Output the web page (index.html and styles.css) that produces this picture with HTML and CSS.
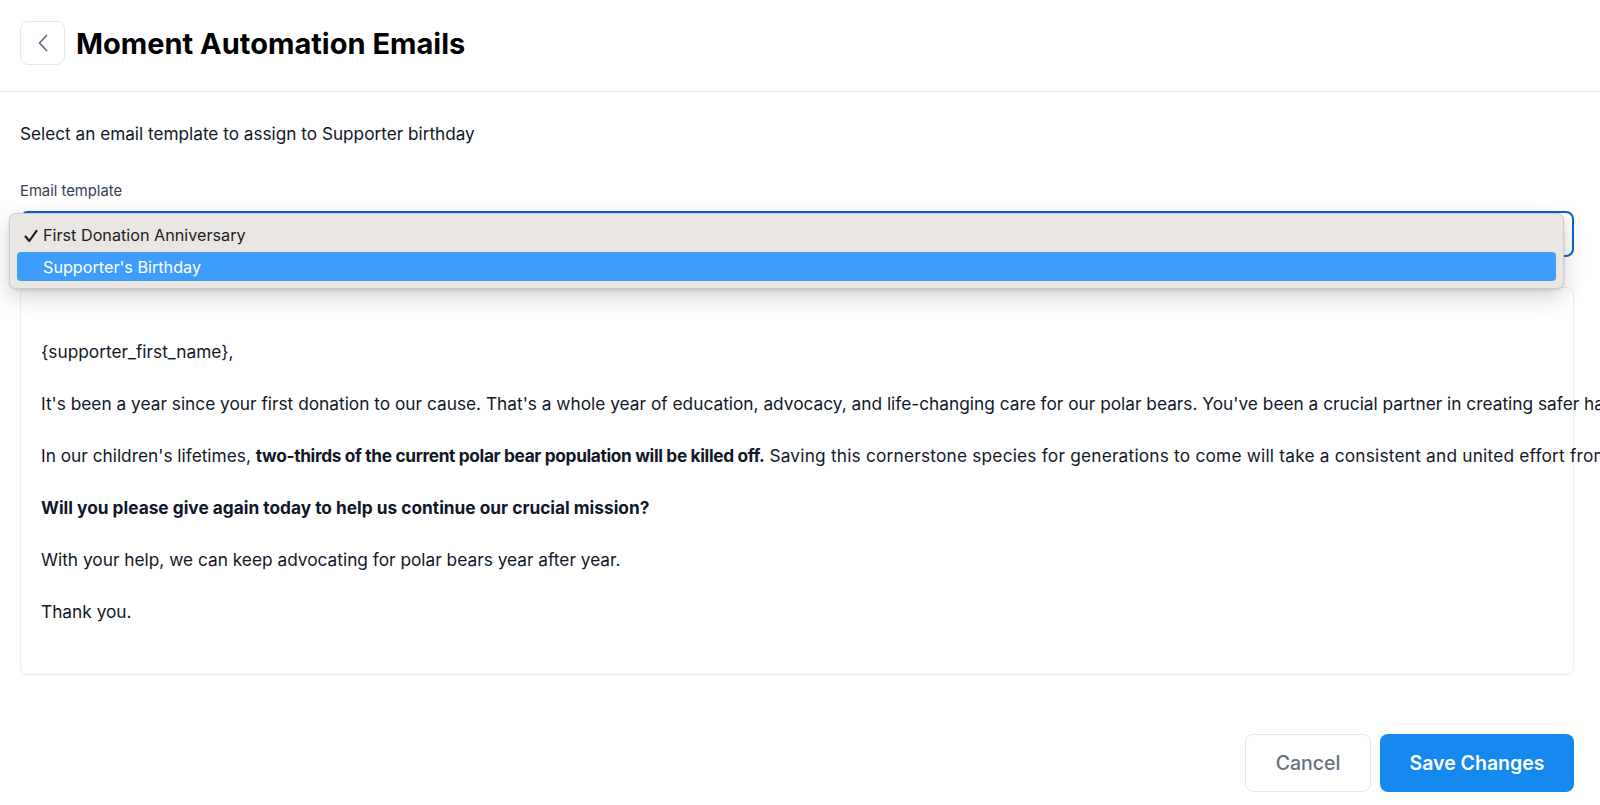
FILE: index.html
```html
<!DOCTYPE html>
<html lang="en">
<head>
<meta charset="utf-8">
<title>Moment Automation Emails</title>
<link rel="stylesheet" href="styles.css">
</head>
<body>
<header class="page-header">
  <button class="back-btn" aria-label="Back">
    <svg width="16" height="20" viewBox="0 0 16 20" fill="none"><path d="M11.5 2.5 L4.5 10 L11.5 17.5" stroke="#667085" stroke-width="1.8" stroke-linecap="round" stroke-linejoin="round"/></svg>
  </button>
  <h1 class="page-title">Moment Automation Emails</h1>
</header>
<main class="content">
  <p class="intro">Select an email template to assign to Supporter birthday</p>
  <label class="field-label">Email template</label>
  <div class="select-wrap">
    <div class="select-box"></div>
    <div class="menu">
      <div class="menu-item">
        <svg class="check" width="14" height="14" viewBox="0 0 14 14" fill="none"><path d="M1.5 7.5 L5.3 12 L12.5 1.8" stroke="#1a1a1a" stroke-width="2.1" stroke-linecap="round" stroke-linejoin="round"/></svg>
        <span>First Donation Anniversary</span>
      </div>
      <div class="menu-item active"><span>Supporter's Birthday</span></div>
    </div>
  </div>
  <div class="preview">
    <p>{supporter_first_name},</p>
    <p>It's been a year since your first donation to our cause. That's a whole year of education, advocacy, and life-changing care for our polar bears. You've been a crucial partner in creating safer habitats and a brighter future for them.</p>
    <p>In our children's lifetimes, <strong class="tight">two-thirds of the current polar bear population will be killed off.</strong> <span class="loose">Saving this cornerstone species for generations to come will take a consistent and united effort from all of us.</span></p>
    <p><strong>Will you please give again today to help us continue our crucial mission?</strong></p>
    <p>With your help, we can keep advocating for polar bears year after year.</p>
    <p>Thank you.</p>
  </div>
  <div class="actions">
    <button class="btn btn-cancel">Cancel</button>
    <button class="btn btn-save">Save Changes</button>
  </div>
</main>
</body>
</html>
```

FILE: styles.css
```css
html, body {
  margin: 0;
  padding: 0;
  overflow: hidden;
  background: #ffffff;
  font-family: "Inter", "Liberation Sans", sans-serif;
  color: #101828;
}

.page-header {
  display: flex;
  align-items: center;
  gap: 11px;
  padding: 21px 20px 26px;
  border-bottom: 1px solid #e6e8ec;
}

.back-btn {
  width: 45px;
  height: 44px;
  box-sizing: border-box;
  border: 1px solid #e4e7ec;
  border-radius: 8px;
  background: #fff;
  display: flex;
  align-items: center;
  justify-content: center;
  padding: 0;
}

.page-title {
  margin: 0;
  font-size: 29px;
  font-weight: 700;
  color: #000;
}

.content {
  padding: 0 26px 0 20px;
}

.intro {
  margin: 30px 0 0;
  font-size: 17.2px;
  line-height: 24px;
  color: #101828;
}

.field-label {
  display: block;
  margin-top: 35px;
  font-size: 14.8px;
  line-height: 20px;
  color: #344054;
}

.select-wrap {
  position: relative;
  margin-top: 10px;
}

.select-box {
  height: 46px;
  box-sizing: border-box;
  border: 2px solid #0b63ce;
  border-radius: 8px;
}

.menu {
  position: absolute;
  top: 2px;
  left: -11px;
  width: 1555px;
  box-sizing: border-box;
  padding: 4px 7px 7px;
  background: #e9e6e3;
  border: 1px solid #cfccc9;
  border-radius: 7px;
  box-shadow: 0 8px 22px rgba(0, 0, 0, 0.18), 0 1px 3px rgba(0, 0, 0, 0.12);
  font-size: 16.2px;
  color: #1d1d1d;
}

.menu-item {
  position: relative;
  display: flex;
  align-items: center;
  height: 29px;
  padding-left: 26px;
  border-radius: 4px;
}

.menu-item:first-child {
  height: 34px;
}

.menu-item .check {
  position: absolute;
  left: 7px;
  top: 11px;
}

.menu-item.active {
  background: #3f9efc;
  color: #ffffff;
}

.preview {
  margin-top: 30px;
  height: 388px;
  box-sizing: border-box;
  border: 1px solid #ececec;
  border-radius: 7px;
  padding: 52px 20px;
  display: flex;
  flex-direction: column;
  gap: 28px;
}

.preview p {
  margin: 0;
  font-size: 17.3px;
  line-height: 24px;
  white-space: nowrap;
  color: #101828;
}

.preview strong {
  font-weight: 700;
}

.preview .tight {
  font-weight: 650;
  letter-spacing: -0.35px;
}

.preview .loose {
  letter-spacing: 0.2px;
}

.actions {
  display: flex;
  justify-content: flex-end;
  gap: 9px;
  margin-top: 59px;
}

.btn {
  height: 58px;
  box-sizing: border-box;
  border-radius: 8px;
  font-family: "Inter", "Liberation Sans", sans-serif;
  font-size: 19.5px;
  cursor: pointer;
}

.btn-cancel {
  width: 126px;
  background: #fff;
  border: 1px solid #e4e7ec;
  color: #667085;
  font-weight: 500;
}

.btn-save {
  width: 194px;
  background: #1589ee;
  border: none;
  color: #fff;
  font-weight: 600;
}
```
